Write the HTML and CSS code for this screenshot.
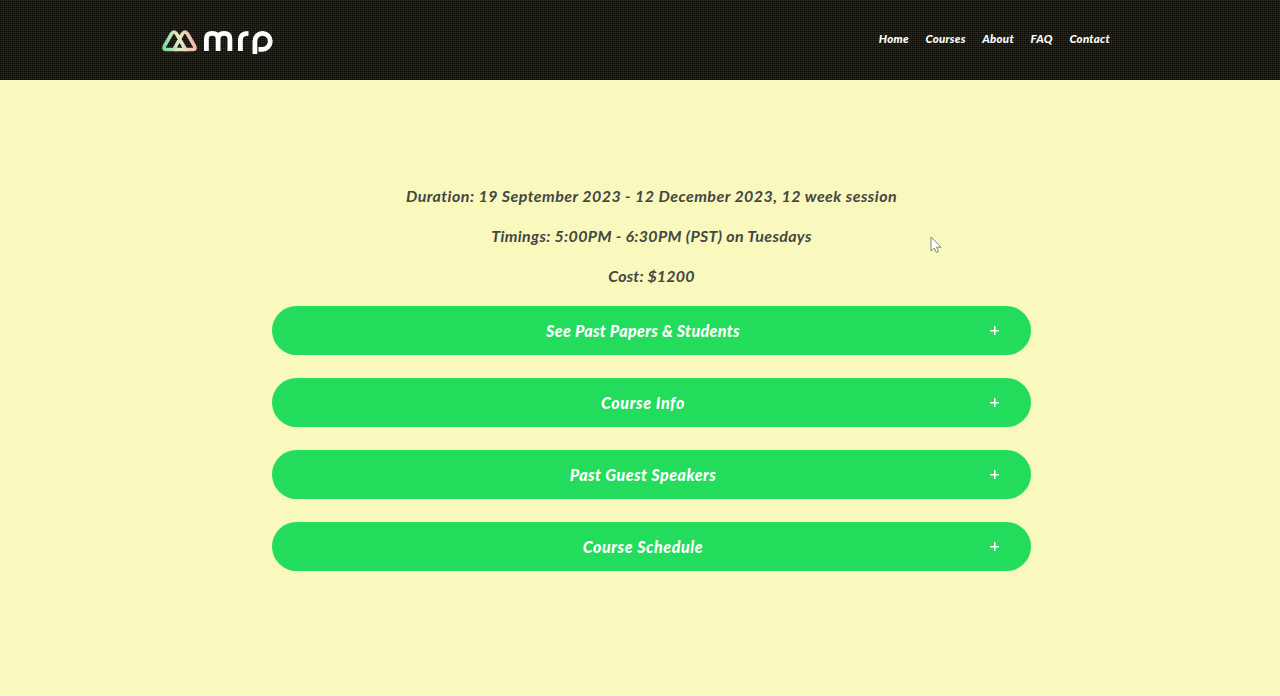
FILE: index.html
```html
<!DOCTYPE html>
<html lang="en">
<head>
<meta charset="utf-8">
<title>MRP Course</title>
<link rel="stylesheet" href="styles.css">
</head>
<body>
<header class="header">
  <a class="logo" aria-label="mrp">
    <svg width="112" height="27" viewBox="0 0 112 27" fill="none">
      <defs><linearGradient id="g" gradientUnits="userSpaceOnUse" x1="1" y1="20" x2="34" y2="14"><stop offset="0" stop-color="#6fd99a"/><stop offset=".5" stop-color="#e6e8c4"/><stop offset="1" stop-color="#f3b5a5"/></linearGradient></defs>
      <g stroke="url(#g)" stroke-width="3.600" stroke-linejoin="round" stroke-linecap="round">
        <path d="M15 20.500H3.500Q1 20.500 2.500 17L9.400 5Q12 1 14.600 5L23.500 20.500H31.500Q34 20.500 32.500 17L25.600 5Q23 1 20.300 5L12.500 19.500"/>
        <path d="M13 20.500H24"/>
      </g>
      <g stroke="#fff" stroke-width="4.800">
        <path d="M44.400 22V9.700Q44.400 4.400 50.300 4.400Q56.100 4.400 56.100 9.700V22M56.100 22V9.700Q56.100 4.400 62 4.400Q67.900 4.400 67.900 9.700V22"/>
        <path d="M78.400 22V11Q78.400 4.400 86.500 4.400"/>
        <path d="M92.900 25V12.400A7.700 8 0 1 1 100.600 20.300H96.500"/>
      </g>
    </svg>
  </a>
  <nav class="nav"><a>Home</a><a>Courses</a><a>About</a><a>FAQ</a><a>Contact</a></nav>
</header>
<main class="main">
  <div class="details">
    <p class="duration">Duration: 19 September 2023 - 12 December 2023, 12 week session</p>
    <p class="timings">Timings: 5:00PM - 6:30PM (PST) on Tuesdays</p>
    <p class="cost">Cost: $1200</p>
  </div>
  <div class="accordion">
    <button class="item papers"><span class="label">See Past Papers &amp; Students</span><span class="plus"></span></button>
    <button class="item info"><span class="label">Course Info</span><span class="plus"></span></button>
    <button class="item speakers"><span class="label">Past Guest Speakers</span><span class="plus"></span></button>
    <button class="item schedule"><span class="label">Course Schedule</span><span class="plus"></span></button>
  </div>
</main>
<svg class="cursor" width="13" height="18" viewBox="0 0 13 18"><path d="M1 1V15L4.300 12L6.400 16.500L8.600 15.500L6.600 11.200H11Z" fill="#fff" stroke="#777" stroke-width=".9"/></svg>
</body>
</html>
```
FILE: styles.css
```css
* { box-sizing: border-box; }
body {
  margin: 0;
  height: 696px;
  overflow: hidden;
  font-family: Lato, "Liberation Sans", sans-serif;
  font-style: italic;
  font-weight: 700;
  background: #f5f6f0 url("data:image/svg+xml,%3Csvg xmlns='http://www.w3.org/2000/svg' width='4' height='4' shape-rendering='crispEdges'%3E%3Cpath fill='%23f6f6ba' d='M0 0h1v1h-1zM2 0h1v1h-1zM1 1h1v1h-1zM3 1h1v1h-1zM0 2h1v1h-1zM2 2h1v1h-1zM1 3h1v1h-1zM3 3h1v1h-1z'/%3E%3C/svg%3E");
}
.header {
  height: 80px;
  padding: 0 170px 0 162px;
  display: flex;
  justify-content: space-between;
  background:
    repeating-linear-gradient(0deg, rgba(0, 0, 0, .5) 0 1px, transparent 1px 2px),
    repeating-linear-gradient(90deg, #1c1c14 0 1px, #333300 1px 2px);
}
.logo { padding-top: 29px; }
.logo svg { display: block; }
.nav {
  display: flex;
  gap: 16.700px;
  padding-top: 31px;
  font-size: 11.500px;
  line-height: 15px;
  letter-spacing: .25px;
  font-weight: 900;
  color: #fff;
}
.main {
  width: 759px;
  margin-left: 272px;
  padding-top: 96px;
}
.details {
  display: flex;
  flex-direction: column;
  align-items: center;
  color: #444644;
  font-size: 16px;
  line-height: 40px;
  white-space: nowrap;
}
.details p { margin: 0; }
.duration { letter-spacing: .445px; }
.timings { letter-spacing: .33px; }
.cost { letter-spacing: .17px; }
.accordion {
  display: grid;
  gap: 23px;
  padding-top: 10px;
}
.item {
  display: flex;
  align-items: center;
  width: 100%;
  height: 49px;
  padding: 0 32px 0 24px;
  border: 0;
  border-radius: 25px;
  color: #fff;
  font: inherit;
  font-size: 16px;
  font-weight: 900;
  background: #20d084 url("data:image/svg+xml,%3Csvg xmlns='http://www.w3.org/2000/svg' width='4' height='4' shape-rendering='crispEdges'%3E%3Cpath fill='%2328e060' d='M0 0h1v1h-1zM2 0h1v1h-1zM1 1h1v1h-1zM3 1h1v1h-1zM0 2h1v1h-1zM2 2h1v1h-1zM1 3h1v1h-1zM3 3h1v1h-1z'/%3E%3C/svg%3E");
}
.papers { letter-spacing: .36px; }
.info { letter-spacing: .65px; }
.speakers { letter-spacing: .48px; }
.schedule { letter-spacing: .6px; }
.label { flex: 1; text-align: center; }
.plus {
  width: 9px;
  height: 9px;
  background: linear-gradient(#fff, #fff) center / 9px 1.500px no-repeat, linear-gradient(#fff, #fff) center / 1.500px 9px no-repeat;
}
.cursor { position: absolute; left: 930px; top: 236px; }
```
